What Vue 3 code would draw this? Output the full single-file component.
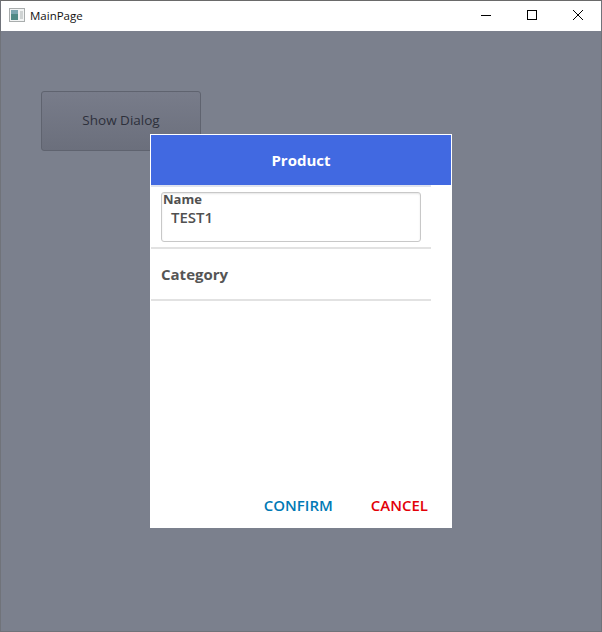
<script setup>
const title = 'MainPage'
</script>
<template>
  <div class="window">
    <div class="titlebar">
      <svg class="app-icon" width="16" height="14" viewBox="0 0 16 14">
        <rect x="0.5" y="0.5" width="15" height="13" fill="#f2f4f4" stroke="#a9adad" />
        <rect x="2" y="2" width="7" height="10" fill="#4f8a86" />
        <rect x="2" y="2" width="7" height="4" fill="#7aa6b0" />
        <rect x="11" y="3" width="3" height="8" fill="#cfd3d3" />
      </svg>
      <span class="title">{{ title }}</span>
      <div class="controls">
        <span class="ctl">
          <svg width="12" height="12" viewBox="0 0 12 12"><path d="M1 6.5h10" stroke="#000" fill="none" /></svg>
        </span>
        <span class="ctl">
          <svg width="12" height="12" viewBox="0 0 12 12"><rect x="1.5" y="1.5" width="9" height="9" stroke="#000" fill="none" /></svg>
        </span>
        <span class="ctl">
          <svg width="12" height="12" viewBox="0 0 12 12"><path d="M1 1l10 10M11 1L1 11" stroke="#000" fill="none" /></svg>
        </span>
      </div>
    </div>
    <div class="content">
      <button class="show-btn">Show Dialog</button>
      <div class="dialog">
        <div class="dialog-head">Product</div>
        <div class="dialog-body">
          <div class="row first">
            <div class="field">
              <label>Name</label>
              <div class="value">TEST1</div>
            </div>
          </div>
          <div class="row category">Category</div>
        </div>
        <div class="actions">
          <button class="act confirm">CONFIRM</button>
          <button class="act cancel">CANCEL</button>
        </div>
      </div>
    </div>
  </div>
</template>
<style scoped>
.window { width:602px; height:632px; box-sizing:border-box; border:1px solid #70737a; border-top-color:#6a6a6a; display:flex; flex-direction:column; font-family:"Open Sans","Noto Sans",sans-serif; }
.titlebar { height:30px; background:#fff; display:flex; align-items:center; padding-left:8px; flex:none; }
.app-icon { margin-right:5px; margin-top:-2px; }
.title { font-size:11.5px; color:#111; margin-top:-1px; }
.controls { margin-left:auto; display:flex; margin-top:-2px; }
.ctl { width:46px; height:28px; display:grid; place-items:center; }
.content { flex:1; position:relative; background:#7b808d; padding:60px 0 0 40px; }
.show-btn { display:block; width:160px; height:60px; border:1px solid #5f636f; border-radius:3px; background:linear-gradient(#787c8a,#6b6f7c); color:#2d303b; font:13.5px "Open Sans",sans-serif; padding:0 0 2px; }
.dialog { position:absolute; left:149px; top:103px; width:302px; height:394px; box-sizing:border-box; border:1px solid #fff; border-bottom:0; background:#fff; display:flex; flex-direction:column; }
.dialog-head { height:50px; background:#4169e1; color:#fff; font-size:15px; font-weight:700; display:grid; place-items:center; flex:none; }
.dialog-body { flex:1; padding-right:20px; }
.row { border-top:2px solid #e2e2e2; }
.first { height:62px; padding:5px 10px 0; box-sizing:border-box; border-top-color:#dfe3ee; }
.field { height:50px; box-sizing:border-box; border:1px solid #c8c8c8; border-radius:3px; box-shadow:inset 0 1px 2px #e6e6e6; padding:0 9px; position:relative; }
.field label { position:absolute; left:1px; top:-2px; font-size:13px; line-height:16px; font-weight:700; color:#505050; }
.value { padding-top:14px; font-size:15px; line-height:20px; font-weight:600; color:#505050; }
.category { height:54px; box-sizing:border-box; border-bottom:2px solid #e2e2e2; padding:15px 10px 0; font-size:15px; line-height:20px; font-weight:700; color:#555; }
.actions { display:flex; justify-content:flex-end; gap:38px; padding:0 23px 13px 0; flex:none; }
.act { border:0; background:none; padding:0; font:600 15px/20px "Open Sans",sans-serif; }
.confirm { color:#0079b5; }
.cancel { color:#e30008; }
</style>
<style>
body { margin:0; overflow:hidden; }
</style>
